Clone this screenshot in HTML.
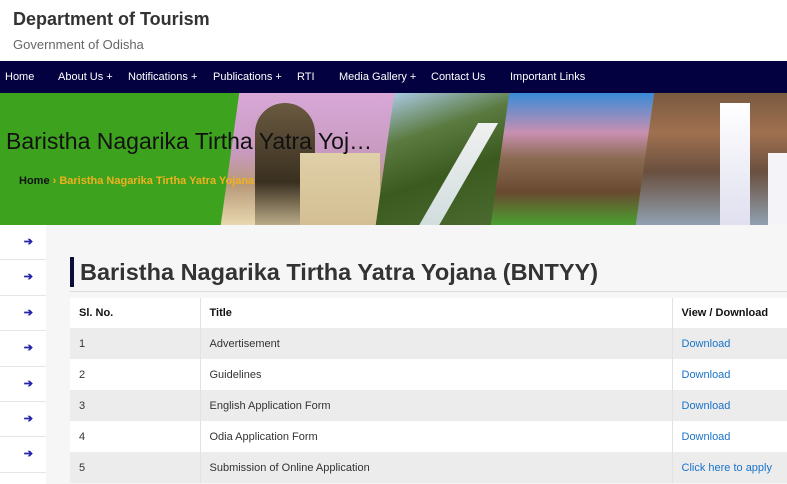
<!DOCTYPE html>
<html><head><meta charset="utf-8"><style>
*{margin:0;padding:0;box-sizing:border-box}
body{width:787px;height:484px;overflow:hidden;font-family:"Liberation Sans",sans-serif;background:#fff;position:relative}
.hdr{height:61px;padding:9px 13px;background:#fff}
.hdr h1{font-size:18px;font-weight:bold;color:#333}
.hdr p{font-size:13px;color:#666;margin-top:7px}
.nav{position:absolute;top:61px;left:0;width:787px;height:32px;background:#03013f;color:#fff;font-size:11px}
.nav span{position:absolute;top:10px}
.ban{position:absolute;top:93px;left:0;width:787px;height:132px;background:#3da31e;overflow:hidden}
.img{position:absolute;top:0;height:132px}
.ban h2{position:absolute;left:6px;top:35px;font-size:23px;font-weight:normal;color:#111;z-index:5;white-space:nowrap}
.bc{position:absolute;left:19px;top:82px;font-size:11px;font-weight:bold;z-index:5}
.side{position:absolute;left:0;top:225px;width:46px;height:259px;background:#fff}
.side div{height:35.4px;border-bottom:1px solid #e6e6e6;color:#2222aa;font-size:11px;font-weight:bold;text-align:right;padding-right:13px;padding-top:10px}
.main{position:absolute;left:46px;top:225px;width:741px;height:259px;background:#f6f6f6}
.ttl{position:absolute;left:70px;top:257px;height:30px;border-left:4px solid #0d0d3a;padding-left:6px;font-size:23.5px;font-weight:bold;color:#333;line-height:30px;white-space:nowrap}
.line{position:absolute;left:70px;top:291px;width:717px;height:1px;background:#ddd}
table{position:absolute;left:70px;top:298px;width:720px;border-collapse:collapse;font-size:11px;color:#333}
td{height:31px;padding-left:9px;border-right:1px solid #e2e2e2}
tr:nth-child(even) td{background:#ececec}
tr:nth-child(odd) td{background:#fff}
tr.h td{height:30px;font-weight:bold;color:#111}
a{color:#1a73c8;text-decoration:none}
</style></head><body>
<div class="hdr"><h1>Department of Tourism</h1><p>Government of Odisha</p></div>
<div class="nav">
<span style="left:5px">Home</span><span style="left:58px">About Us +</span><span style="left:128px">Notifications +</span><span style="left:213px">Publications +</span><span style="left:297px">RTI</span><span style="left:339px">Media Gallery +</span><span style="left:431px">Contact Us</span><span style="left:510px">Important Links</span>
</div>
<div class="ban">
<div class="img" style="left:230px;width:170px;background:linear-gradient(180deg,#d9a8d8 0%,#c89ac0 45%,#b89a78 70%,#e8d8b0 100%);transform:skewX(-8deg)"></div>
<div class="img" style="left:255px;width:60px;top:10px;background:linear-gradient(180deg,#6a5a40,#3a3020 60%,#d8c8a0);border-radius:30px 30px 0 0"></div>
<div class="img" style="left:300px;width:80px;top:60px;background:linear-gradient(180deg,#e0d0a8,#c8b080)"></div>
<div class="img" style="left:385px;width:120px;background:linear-gradient(160deg,#a9c8e0 0%,#5a7a40 30%,#3a5a20 60%,#4a6a30 100%);transform:skewX(-8deg)"></div>
<div class="img" style="left:440px;width:20px;top:30px;background:linear-gradient(180deg,#f0f0f0,#c8d8d8);transform:skewX(-30deg)"></div>
<div class="img" style="left:500px;width:145px;background:linear-gradient(180deg,#3a8ad8 0%,#c890b0 30%,#8a6a50 50%,#6a4a30 75%,#4aa030 100%);transform:skewX(-8deg)"></div>
<div class="img" style="left:645px;width:142px;background:linear-gradient(180deg,#7a5a40 0%,#a07050 30%,#6a5040 60%,#90a0b0 100%);transform:skewX(-8deg)"></div>
<div class="img" style="left:720px;width:30px;top:10px;background:linear-gradient(180deg,#fff,#dde)"></div>
<div class="img" style="left:768px;width:19px;top:60px;background:#f4f4f8"></div>
<h2>Baristha Nagarika Tirtha Yatra Yoj…</h2>
<div class="bc"><span style="color:#111">Home</span><span style="color:#f0b020"> › Baristha Nagarika Tirtha Yatra Yojana</span></div>
</div>
<div class="main"></div>
<div class="side"><div>➔</div><div>➔</div><div>➔</div><div>➔</div><div>➔</div><div>➔</div><div>➔</div></div>
<div class="ttl">Baristha Nagarika Tirtha Yatra Yojana (BNTYY)</div>
<div class="line"></div>
<table>
<colgroup><col style="width:130px"><col style="width:472px"><col></colgroup>
<tr class="h"><td>Sl. No.</td><td>Title</td><td>View / Download</td></tr>
<tr><td>1</td><td>Advertisement</td><td><a>Download</a></td></tr>
<tr><td>2</td><td>Guidelines</td><td><a>Download</a></td></tr>
<tr><td>3</td><td>English Application Form</td><td><a>Download</a></td></tr>
<tr><td>4</td><td>Odia Application Form</td><td><a>Download</a></td></tr>
<tr><td>5</td><td>Submission of Online Application</td><td><a>Click here to apply</a></td></tr>
</table>
</body></html>
